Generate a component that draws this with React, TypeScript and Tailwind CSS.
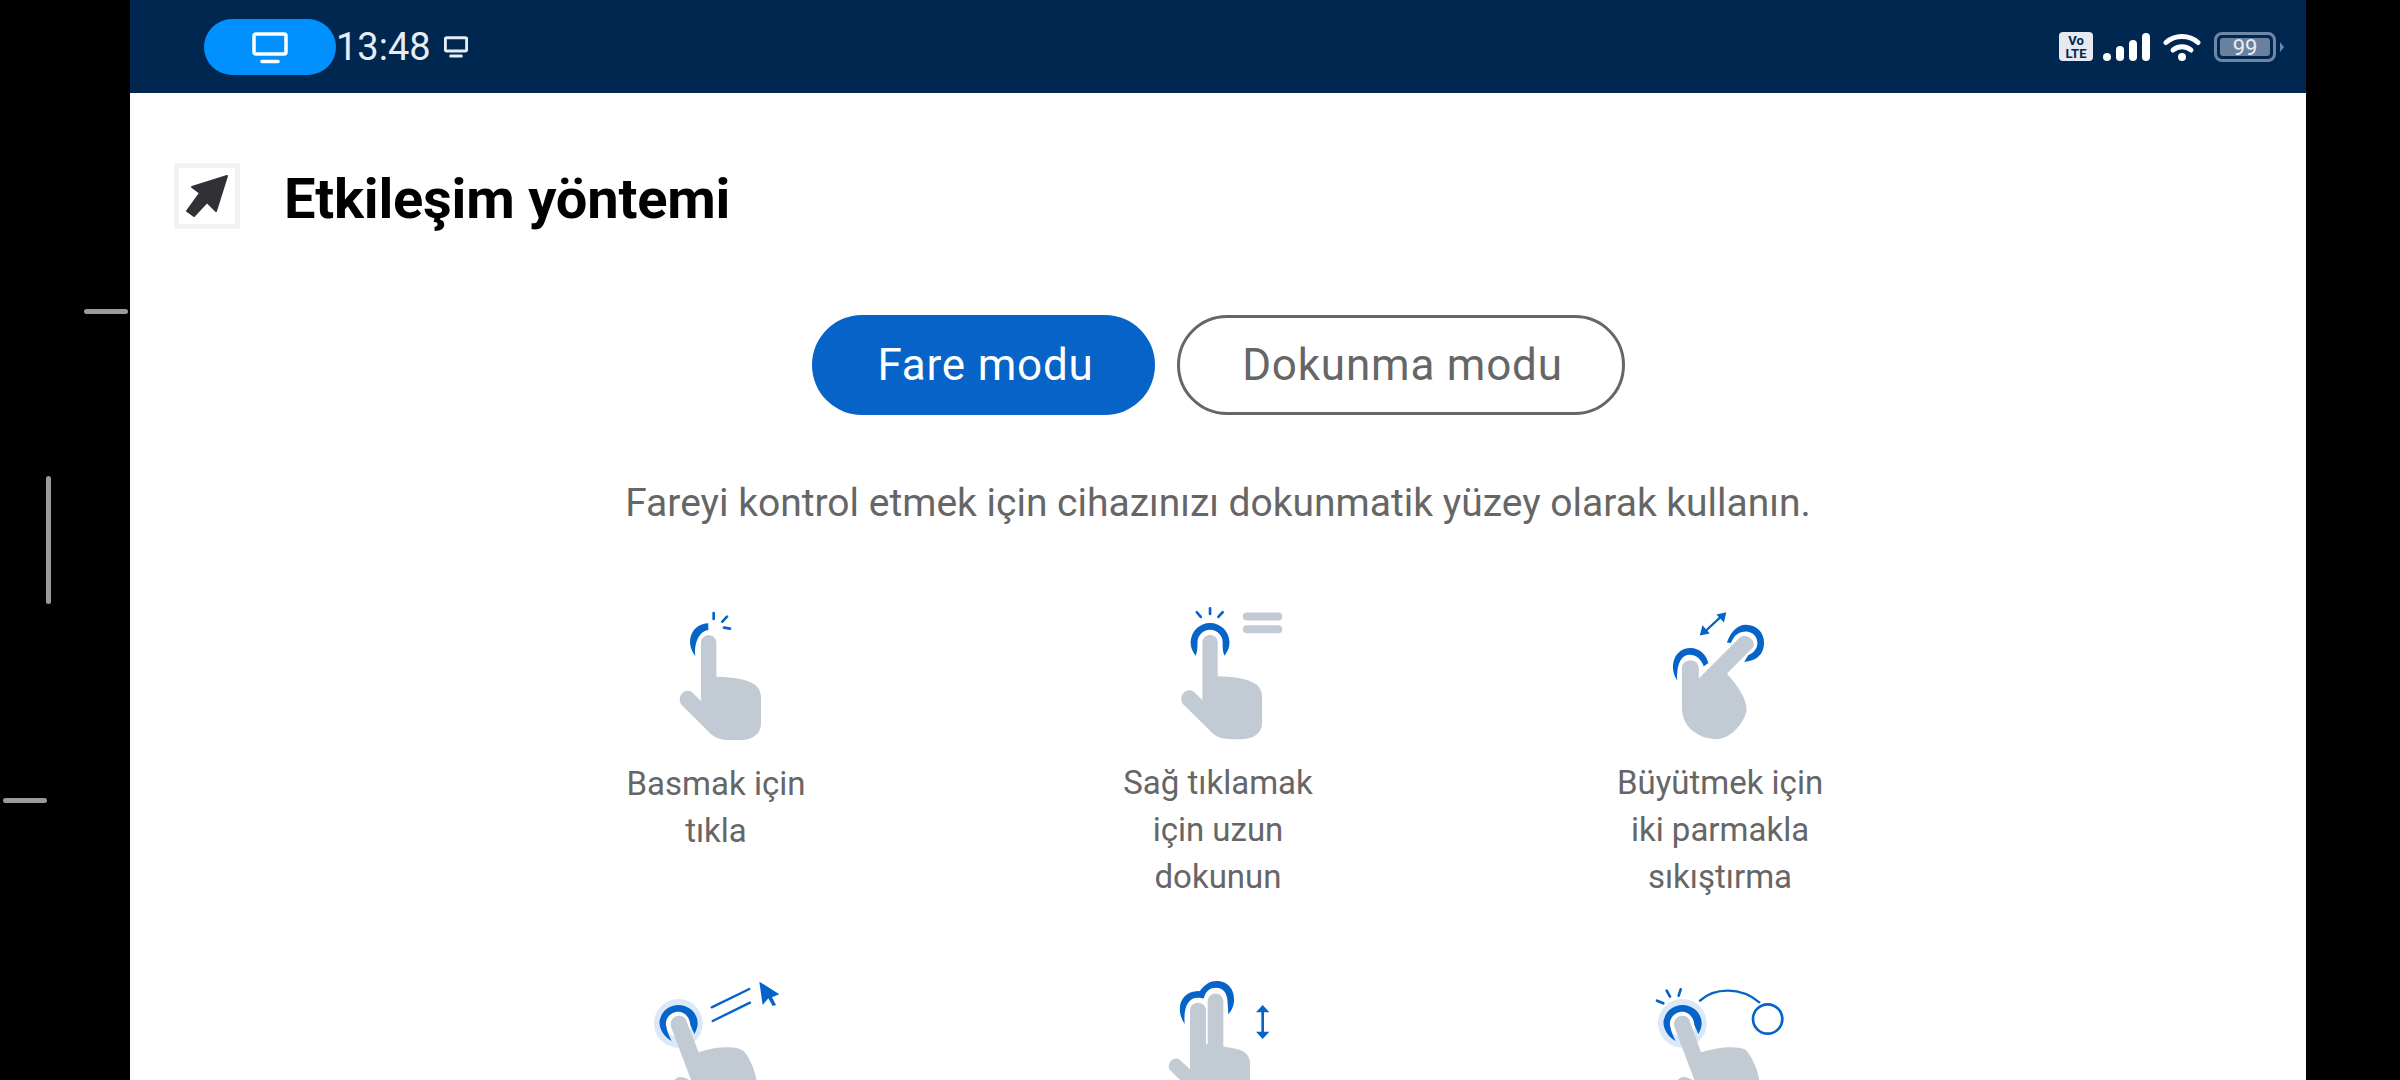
import React from 'react'

const BLUE = '#0663c7'
const GRAY = '#c2cad4'

function Monitor({ className, weight = 3.5 }: { className: string; weight?: number }) {
  return (
    <svg viewBox="0 0 36 32" className={className} fill="none" stroke="currentColor">
      <rect x="2" y="2" width="32" height="20" rx="2" strokeWidth={weight} />
      <path d="M10 29.5h16" strokeWidth={weight} strokeLinecap="round" />
    </svg>
  )
}

function StatusBar() {
  return (
    <div className="h-[93px] bg-[#002750] flex items-center justify-between pl-[74px] pr-[22px]">
      <div className="flex items-center">
        <div className="w-[132px] h-[56px] rounded-full bg-[#0091ff] flex items-center justify-center text-white">
          <Monitor className="w-[36px] h-[32px] mt-[2px]" />
        </div>
        <span className="text-[38px] leading-none text-[#e8edf5]">13:48</span>
        <Monitor className="w-[24px] h-[22px] ml-[13px] text-[#e8edf5]" weight={4.5} />
      </div>
      <div className="flex items-center">
        <div className="w-[34px] h-[29px] rounded-[4px] bg-[#e6e9ef] text-[#002750] flex flex-col items-center justify-center font-bold text-[13px] leading-[13px]">
          <span>Vo</span>
          <span>LTE</span>
        </div>
        <div className="flex items-end gap-[5px] ml-[10px] h-[28px]">
          <div className="w-[8px] h-[8px] rounded-full bg-white" />
          <div className="w-[8px] h-[15px] rounded-full bg-white" />
          <div className="w-[8px] h-[21px] rounded-full bg-white" />
          <div className="w-[8px] h-[28px] rounded-full bg-white" />
        </div>
        <svg viewBox="0 0 38 28" className="w-[38px] h-[28px] ml-[13px]" fill="none" stroke="white" strokeWidth="5" strokeLinecap="round">
          <path d="M3 9.5C12 1.5 26 1.5 35 9.5" />
          <path d="M10 17C15 12.5 23 12.5 28 17" />
          <circle cx="19" cy="24" r="4" fill="white" stroke="none" />
        </svg>
        <div className="w-[62px] h-[30px] ml-[13px] rounded-[8px] border-[3px] border-[#6d87a5] p-[3px]">
          <div className="h-full rounded-[3px] bg-[#6a819e] text-[#e8ecf2] text-[22px] leading-[19px] text-center">99</div>
        </div>
        <svg viewBox="0 0 4 10" className="w-[4px] h-[10px] ml-[4px]">
          <path d="M0 0l4 5-4 5z" fill="#6d87a5" />
        </svg>
      </div>
    </div>
  )
}

function Icon({ viewBox, children }: { viewBox: string; children: React.ReactNode }) {
  return (
    <svg viewBox={viewBox} className="w-[160px] h-[160px] block" fill="none" strokeLinecap="round">
      {children}
    </svg>
  )
}

function TapIcon() {
  return (
    <Icon viewBox="-45 0 480 480">
      <path d="M133 168C100 125 122 72 172 70L172 90C148 92 128 125 133 168Z" fill={BLUE} />
      <path d="M188 39v18M228 50l-14 15M219 83l18 3" stroke={BLUE} strokeWidth="8" />
      <path
        d="M196 230C260 232 330 240 330 290L330 370C330 405 300 420 270 420L235 420C205 420 185 410 170 392L95 318C72 295 100 258 125 278L150 303L150 128C150 98 196 98 196 128Z"
        fill={GRAY}
      />
    </Icon>
  )
}

function LongPressIcon() {
  return (
    <Icon viewBox="-66 0 480 480">
      <path
        d="M107 168A58.7 58.7 0 1 1 193 168C188 150 188 145 188 128A38 38 0 0 0 112 128C112 145 112 150 107 168Z"
        fill={BLUE}
      />
      <path d="M150 25v17M110 37l12 14M188 37l-13 14" stroke={BLUE} strokeWidth="8" />
      <path d="M261 50h95M261 88h95" stroke={GRAY} strokeWidth="24" />
      <path
        d="M173 230C237 232 307 240 307 290L307 370C307 405 277 420 247 420L212 420C182 420 162 410 147 392L72 318C49 295 77 258 102 278L127 303L127 128C127 98 173 98 173 128Z"
        fill={GRAY}
      />
    </Icon>
  )
}

function PinchIcon() {
  return (
    <Icon viewBox="-33 0 480 480">
      <path
        d="M78 243C50 200 70 145 118 145C145 145 165 165 172 190L158 200C150 178 135 165 115 165C90 165 75 195 78 243Z"
        fill={BLUE}
      />
      <path
        d="M228 128C240 95 260 75 285 75C320 75 340 100 340 130C340 165 315 185 280 187L292 167C310 160 320 145 320 130C320 110 305 95 285 95C265 95 250 105 240 130Z"
        fill={BLUE}
      />
      <path d="M165 92L210 50" stroke={BLUE} strokeWidth="7" />
      <path d="M146 107L154 76L176 101ZM226 37L196 44L219 68Z" fill={BLUE} />
      <path
        d="M228 222C260 260 290 300 287 335C280 370 240 420 195 420C150 420 95 390 92 330L92 205C92 175 143 175 143 205L143 237L265 115C285 95 322 125 305 145Z"
        fill={GRAY}
      />
    </Icon>
  )
}

const RING = 'M92 213C60 195 50 160 58 145C65 120 88 105 112 105C145 105 170 130 170 160C170 172 166 182 160 192L148 165C146 140 130 125 112 125C90 125 72 145 75 165C78 185 85 200 92 213Z'

function DragCursorIcon() {
  return (
    <svg viewBox="-15 0 480 330" className="w-[160px] h-[110px] block" fill="none" strokeLinecap="round">
      <circle cx="112" cy="160" r="73" fill="#dbe8f7" />
      <circle cx="112" cy="160" r="40" fill="white" />
      <path d={RING} fill={BLUE} />
      <path d="M212 112L325 57M215 153L327 98" stroke={BLUE} strokeWidth="7" />
      <path d="M355 35L415 73L393 82L405 105L395 108L382 85L365 105Z" fill={BLUE} />
      <path
        d="M90 170C82 135 130 125 137 155L173 247C220 230 290 225 310 245C330 270 340 300 347 330L150 330ZM100 330C110 318 125 318 145 330Z"
        fill={GRAY}
      />
    </svg>
  )
}

function ScrollIcon() {
  return (
    <svg viewBox="-66 0 480 330" className="w-[160px] h-[110px] block" fill="none" strokeLinecap="round">
      <path d="M74 162C45 120 60 63 115 63L135 66L132 85C125 84 120 83 113 83C85 83 70 110 74 162Z" fill={BLUE} />
      <path
        d="M118 65C135 42 150 33 170 33C205 33 225 60 222 95C220 110 215 122 205 133L203 100C203 70 190 53 168 53C150 53 140 62 132 80Z"
        fill={BLUE}
      />
      <path d="M308 125V190" stroke={BLUE} strokeWidth="8" strokeLinecap="butt" />
      <path d="M308 105L328 127H288ZM308 207L328 185H288Z" fill={BLUE} />
      <path
        d="M143 223L143 95C143 62 190 62 190 95L190 230C240 235 270 245 270 280L270 330L60 330L32 302C14 285 42 252 62 272L90 298L90 122C90 90 138 90 138 122L138 223Z"
        fill={GRAY}
      />
    </svg>
  )
}

function DoubleTapDragIcon() {
  return (
    <svg viewBox="-3 0 480 330" className="w-[160px] h-[110px] block" fill="none" strokeLinecap="round">
      <circle cx="124" cy="160" r="73" fill="#dbe8f7" />
      <circle cx="124" cy="160" r="40" fill="white" />
      <path d={RING} fill={BLUE} transform="translate(12 0)" />
      <path d="M48 92L67 100M77 62L87 80M119 58L113 77" stroke={BLUE} strokeWidth="8" />
      <path d="M177 92C220 52 300 50 355 97" stroke={BLUE} strokeWidth="7" />
      <circle cx="380" cy="147" r="44" stroke={BLUE} strokeWidth="8" />
      <path
        d="M100 170C92 135 140 125 147 155L180 247C225 232 290 225 315 240C335 265 350 300 355 330L160 330ZM110 330C120 318 135 318 155 330Z"
        fill={GRAY}
      />
    </svg>
  )
}

const gestures = [
  { icon: <TapIcon />, lines: ['Basmak için', 'tıkla'] },
  { icon: <LongPressIcon />, lines: ['Sağ tıklamak', 'için uzun', 'dokunun'] },
  { icon: <PinchIcon />, lines: ['Büyütmek için', 'iki parmakla', 'sıkıştırma'] },
]

export default function App() {
  return (
    <div className="relative w-[2400px] h-[1080px] overflow-hidden bg-black flex font-['Roboto',sans-serif]">
      {/* navigation handles on the black edge */}
      <div className="absolute left-[84px] top-[309px] w-[44px] h-[5px] rounded-full bg-[#9a9a9a]" />
      <div className="absolute left-[46px] top-[476px] w-[5px] h-[128px] rounded-full bg-[#9a9a9a]" />
      <div className="absolute left-[3px] top-[798px] w-[44px] h-[5px] rounded-full bg-[#9a9a9a]" />

      <div className="ml-[130px] w-[2176px] h-full bg-white">
        <StatusBar />

        <div className="flex items-start pl-[44px] pt-[70px]">
          <div className="w-[66px] h-[66px] border-[5px] border-[#f2f2f2]">
            <svg viewBox="5 5 56 56" className="w-[56px] h-[56px]">
              <path
                d="M53 13L18 24L26 30L13 48L20 53L33 39L42 48Z"
                fill="#303136"
                stroke="#303136"
                strokeWidth="2"
                strokeLinejoin="round"
              />
            </svg>
          </div>
          <h1 className="ml-[44px] mt-[3px] text-[56px] leading-[66px] tracking-[-0.2px] font-bold text-black">Etkileşim yöntemi</h1>
        </div>

        <div className="flex justify-center gap-[22px] mt-[83px] ml-[1px]">
          <button className="w-[343px] h-[100px] pl-[4px] rounded-full bg-[#0663c7] text-white text-[44px] tracking-[0.8px]">
            Fare modu
          </button>
          <button className="w-[448px] h-[100px] pl-[3px] rounded-full border-[3px] border-[#666666] text-[#666666] text-[44px] tracking-[0.8px]">
            Dokunma modu
          </button>
        </div>

        <p className="mt-[58px] text-center text-[39px] leading-[60px] text-[#666666]">
          Fareyi kontrol etmek için cihazınızı dokunmatik yüzey olarak kullanın.
        </p>

        <div className="grid grid-cols-3 w-[1506px] mx-auto mt-[67px] gap-y-[70px]">
          {gestures.map((g) => (
            <div key={g.lines[0]} className="flex flex-col items-center h-[300px]">
              {g.icon}
              <div className="text-center text-[33px] leading-[47px] text-[#666666]">
                {g.lines.map((line) => (
                  <div key={line}>{line}</div>
                ))}
              </div>
            </div>
          ))}
          <div className="flex justify-center">
            <DragCursorIcon />
          </div>
          <div className="flex justify-center">
            <ScrollIcon />
          </div>
          <div className="flex justify-center">
            <DoubleTapDragIcon />
          </div>
        </div>
      </div>
    </div>
  )
}
